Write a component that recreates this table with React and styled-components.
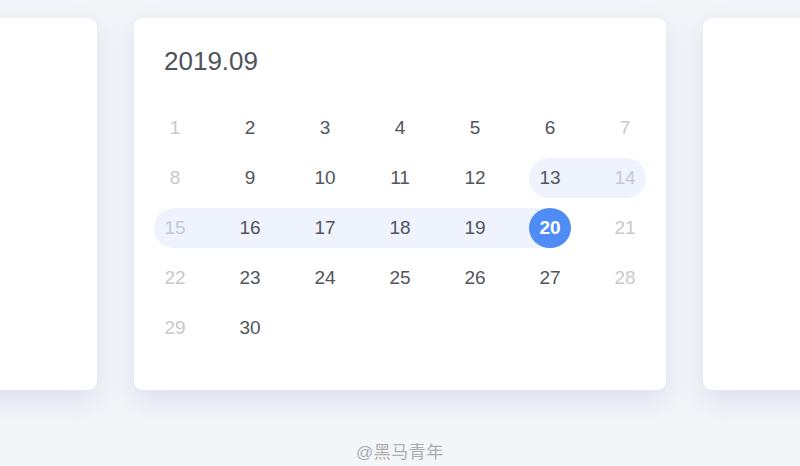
import React from "react";
import styled, { createGlobalStyle, css } from "styled-components";

const Global = createGlobalStyle`
  html, body { margin: 0; padding: 0; }
  body {
    background: #f3f5f9;
    font-family: "Liberation Sans", Arial, "Noto Sans CJK SC", sans-serif;
  }
`;

const Page = styled.div`
  width: 800px;
  height: 466px;
  overflow: hidden;
  background: #f3f5f9;
  display: flex;
  flex-direction: column;
  align-items: center;
`;

const Track = styled.div`
  display: flex;
  justify-content: center;
  gap: 37px;
  margin-top: 18px;
  width: 800px;
`;

const Card = styled.div`
  flex: 0 0 532px;
  height: 372px;
  box-sizing: border-box;
  background: #ffffff;
  border-radius: 9px;
  box-shadow: 0 10px 26px rgba(190, 198, 222, 0.45);
  padding: 28px 20px 0;
`;

const Title = styled.div`
  font-size: 26px;
  line-height: 30px;
  color: #50545c;
  padding-left: 10px;
  margin-bottom: 32px;
`;

const Grid = styled.div`
  display: grid;
  grid-template-columns: repeat(7, 42px);
  grid-auto-rows: 40px;
  column-gap: 33px;
  row-gap: 10px;
`;

const RANGE_BG = "#eef3fe";

const Cell = styled.div`
  position: relative;
  display: flex;
  align-items: center;
  justify-content: center;
  font-size: 19px;
  color: ${(p) => (p.$muted ? "#c8c9cd" : "#51555d")};
  ${(p) =>
    p.$range &&
    css`
      background: ${RANGE_BG};
      border-radius: ${p.$range === "start"
        ? "20px 0 0 20px"
        : p.$range === "end"
        ? "0 20px 20px 0"
        : "0"};
    `}
  ${(p) =>
    p.$link &&
    css`
      &::after {
        content: "";
        position: absolute;
        left: 100%;
        top: 0;
        width: 33px;
        height: 40px;
        background: ${RANGE_BG};
      }
    `}
  ${(p) =>
    p.$selected &&
    css`
      background: linear-gradient(to right, ${RANGE_BG} 50%, transparent 50%);
      &::before {
        content: "";
        position: absolute;
        inset: 0;
        border-radius: 50%;
        background: #4f8cf6;
      }
    `}
`;

const Num = styled.span`
  position: relative;
  z-index: 1;
  ${(p) =>
    p.$selected &&
    css`
      color: #ffffff;
      font-weight: 700;
    `}
`;

const Footer = styled.div`
  margin-top: 48px;
  font-size: 17px;
  color: #abadb1;
  letter-spacing: 0.5px;
`;

const days = Array.from({ length: 30 }, (_, i) => i + 1);

const rangeOf = (d) => {
  if (d === 13 || d === 15) return "start";
  if (d === 14) return "end";
  if (d >= 16 && d <= 19) return "mid";
  return null;
};

export default function App() {
  return (
    <>
      <Global />
      <Page>
        <Track>
          <Card />
          <Card>
            <Title>2019.09</Title>
            <Grid>
              {days.map((d) => {
                const col = (d - 1) % 7;
                const muted = col === 0 || col === 6;
                const range = rangeOf(d);
                const selected = d === 20;
                const link = range === "start" || range === "mid";
                return (
                  <Cell
                    key={d}
                    $muted={muted}
                    $range={range}
                    $link={link}
                    $selected={selected}
                  >
                    <Num $selected={selected}>{d}</Num>
                  </Cell>
                );
              })}
            </Grid>
          </Card>
          <Card />
        </Track>
        <Footer>@黑马青年</Footer>
      </Page>
    </>
  );
}
